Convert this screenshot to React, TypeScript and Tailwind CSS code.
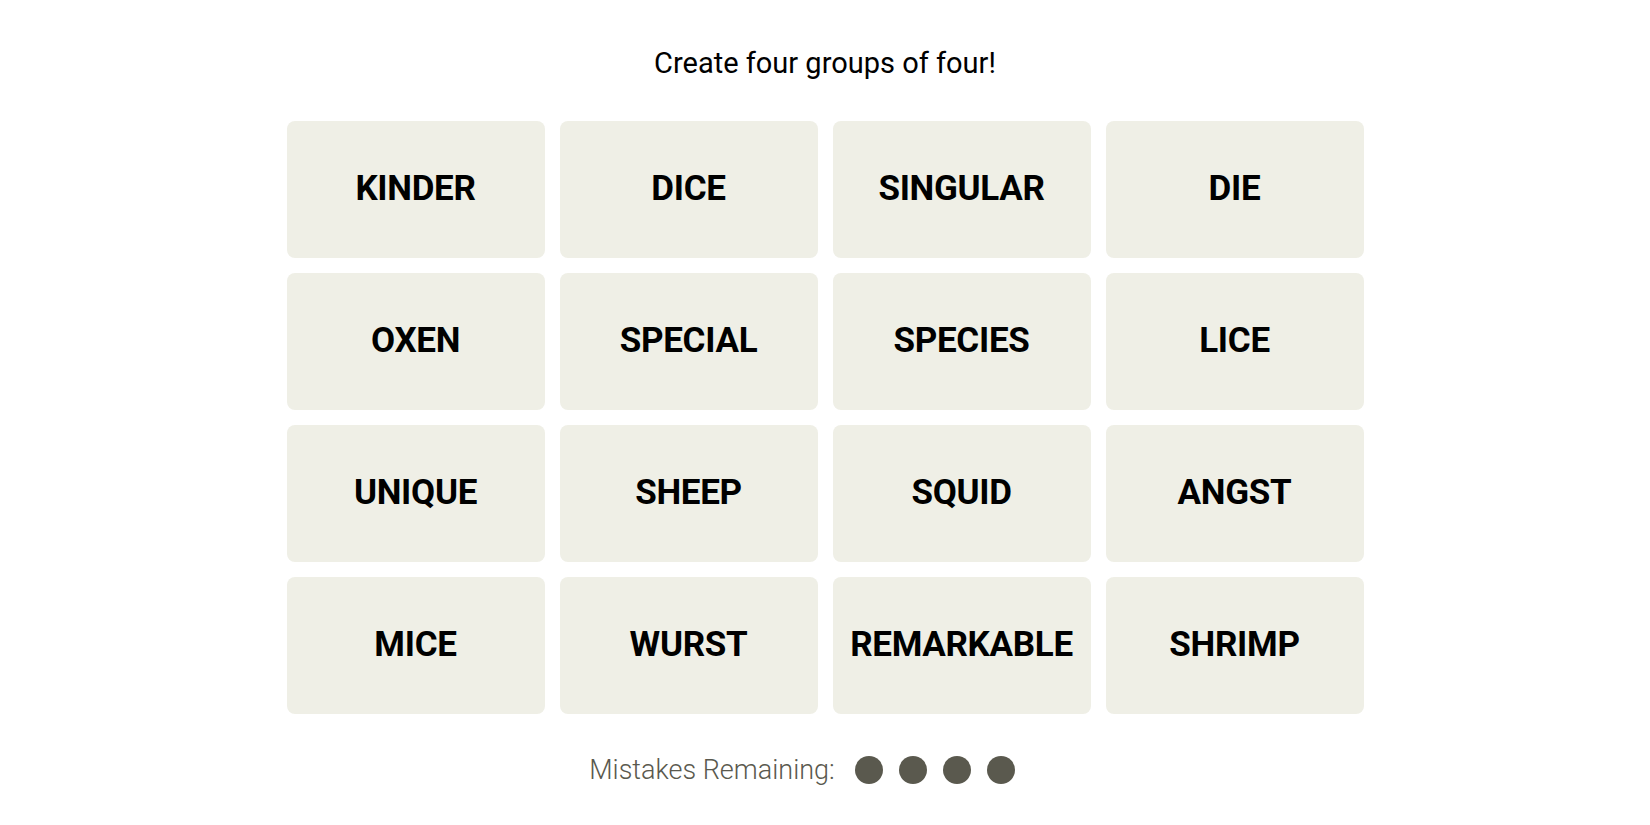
const words = [
  "KINDER", "DICE", "SINGULAR", "DIE",
  "OXEN", "SPECIAL", "SPECIES", "LICE",
  "UNIQUE", "SHEEP", "SQUID", "ANGST",
  "MICE", "WURST", "REMARKABLE", "SHRIMP",
]

export default function App() {
  return (
    <div className="min-h-screen bg-white flex flex-col items-center pt-[46px] font-['Roboto','Liberation_Sans',sans-serif]">
      <h2 className="text-[29px] leading-[34px] font-normal text-black">
        Create four groups of four!
      </h2>

      <section aria-label="board" className="mt-[41px] grid grid-cols-4 gap-[15px]">
        {words.map((w) => (
          <button
            key={w}
            className="w-[258px] h-[137px] rounded-lg bg-[#efefe6] flex items-center justify-center text-[35px] font-bold text-black tracking-[-0.3px]"
          >
            {w}
          </button>
        ))}
      </section>

      <div className="mt-[42px] h-[28px] pr-[46px] flex items-center">
        <span className="text-[27px] leading-[28px] font-light text-[#5a594e]">
          Mistakes Remaining:
        </span>
        <div className="ml-[20px] flex gap-[16px]">
          {[0, 1, 2, 3].map((i) => (
            <span key={i} className="w-[28px] h-[28px] rounded-full bg-[#5a594e]" />
          ))}
        </div>
      </div>
    </div>
  )
}
